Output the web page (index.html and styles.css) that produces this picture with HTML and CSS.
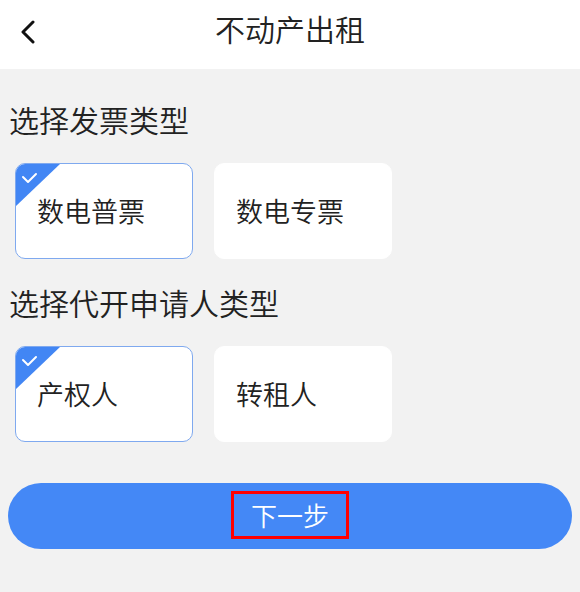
FILE: index.html
```html
<!DOCTYPE html>
<html lang="zh">
<head>
<meta charset="utf-8">
<title>不动产出租</title>
<link rel="stylesheet" href="styles.css">
</head>
<body>
<header class="topbar">
  <span class="back">
    <svg width="16" height="24" viewBox="0 0 16 24"><polyline points="13,2 3,12 13,22" fill="none" stroke="#111" stroke-width="3" stroke-linecap="round" stroke-linejoin="round"/></svg>
  </span>
  <h1 class="title">不动产出租</h1>
</header>
<main class="content">
  <h2 class="section-title">选择发票类型</h2>
  <div class="options">
    <div class="option selected">
      <span class="corner"><svg width="24" height="24" viewBox="0 0 24 24"><polyline points="7,13 12,18 20,10" fill="none" stroke="#fff" stroke-width="2" stroke-linecap="round" stroke-linejoin="round"/></svg></span>
      <span class="label">数电普票</span>
    </div>
    <div class="option">
      <span class="label">数电专票</span>
    </div>
  </div>
  <h2 class="section-title">选择代开申请人类型</h2>
  <div class="options">
    <div class="option selected">
      <span class="corner"><svg width="24" height="24" viewBox="0 0 24 24"><polyline points="7,13 12,18 20,10" fill="none" stroke="#fff" stroke-width="2" stroke-linecap="round" stroke-linejoin="round"/></svg></span>
      <span class="label">产权人</span>
    </div>
    <div class="option">
      <span class="label">转租人</span>
    </div>
  </div>
  <div class="actions">
    <button class="next"><span class="next-label">下一步</span></button>
  </div>
</main>
</body>
</html>
```
FILE: styles.css
```css
* { box-sizing: border-box; }
html, body { margin: 0; padding: 0; }
body {
  background: #f2f2f2;
  font-family: "Noto Sans CJK SC", "Noto Sans", sans-serif;
  font-weight: 350;
  color: #222;
  width: 580px;
  height: 592px;
  overflow: hidden;
}
.topbar {
  position: relative;
  height: 69px;
  background: #fff;
  display: flex;
  justify-content: center;
}
.back {
  position: absolute;
  left: 20px;
  top: 20px;
  width: 16px;
  height: 24px;
  display: flex;
}
.title {
  margin: 0;
  font-size: 30px;
  font-weight: 350;
  line-height: 56px;
  color: #222;
}
.content {
  padding-top: 30px;
}
.section-title {
  margin: 0;
  padding-left: 9px;
  font-size: 30px;
  font-weight: 350;
  line-height: 40px;
  color: #222;
}
.options {
  display: flex;
  gap: 21px;
  padding-left: 15px;
  margin-top: 24px;
  margin-bottom: 23px;
}
.option {
  position: relative;
  width: 178px;
  height: 96px;
  background: #fff;
  border: 1px solid #fff;
  border-radius: 10px;
  overflow: hidden;
  display: flex;
  align-items: center;
  padding-left: 21px;
}
.option.selected {
  border-color: #7fa9ef;
}
.corner {
  position: absolute;
  left: 0;
  top: 0;
  width: 44px;
  height: 42px;
  background: #4286f4;
  clip-path: polygon(0 0, 100% 0, 0 100%);
}
.corner svg { display: block; }
.label {
  font-size: 27px;
  line-height: 36px;
  color: #222;
}
.actions {
  padding: 18px 8px 0;
}
.next {
  display: flex;
  justify-content: center;
  align-items: center;
  width: 100%;
  height: 66px;
  border: none;
  border-radius: 33px;
  background: #4488f6;
  padding: 0 0 2px;
  font-family: inherit;
  font-weight: 350;
}
.next-label {
  display: flex;
  align-items: center;
  justify-content: center;
  width: 118px;
  height: 48px;
  border: 3px solid #ff0000;
  color: #fff;
  font-size: 26px;
  line-height: 1;
}
```
